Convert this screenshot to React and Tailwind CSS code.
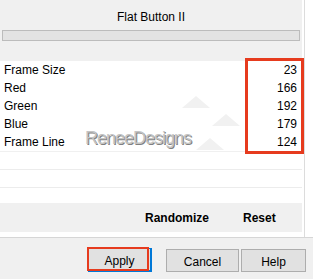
import React from 'react'

const rows = [
  ['Frame Size', 23],
  ['Red', 166],
  ['Green', 192],
  ['Blue', 179],
  ['Frame Line', 124],
]

export default function App() {
  return (
    <div className="relative w-[313px] h-[279px] bg-[#f0f0f0] text-[12px] text-black overflow-hidden" style={{ fontFamily: '"Liberation Sans", Arial, sans-serif' }}>
      <div className="flex h-[238px] bg-white border-b border-[#d6d6d6]">
        <div className="relative w-[302px] flex flex-col">
          <div className="h-[61px] bg-[#f0f0f0] flex flex-col">
            <div className="h-[30px] flex items-center justify-center pt-[4px]">Flat Button II</div>
            <div className="mx-[2px] h-[11px] border border-[#bcbcbc] bg-[#e3e3e3]" />
          </div>
          {rows.map(([label, value]) => (
            <div key={label} className="h-[18px] flex items-center justify-between pl-[4px] pr-[5px]">
              <span>{label}</span>
              <span>{value}</span>
            </div>
          ))}
          <div className="h-[1px] bg-[#f0f0f0]" />
          <div className="h-[18px] border-b border-[#ececec]" />
          <div className="h-[18px] border-b border-[#ececec]" />
          <div className="h-[15px]" />
          <div className="h-[29px] bg-[#f0f0f0] flex items-center font-bold">
            <span className="ml-[145px]">Randomize</span>
            <span className="ml-[34px]">Reset</span>
          </div>

          <svg className="absolute left-[150px] top-[80px]" width="120" height="80">
            <polygon points="46,16 60,28 32,28" fill="#f1f1f1" />
            <polygon points="76,34 90,46 62,46" fill="#f1f1f1" />
            <polygon points="60,58 74,70 46,70" fill="#f1f1f1" />
          </svg>
          <div className="absolute left-[85px] top-[125px] text-[18px] tracking-[-1px] text-[#c4c4c4]" style={{ textShadow: '1px 1px 0 #808080' }}>ReneeDesigns</div>

          <div className="absolute left-[245px] top-[58px] w-[59px] h-[96px] border-[3px] border-[#e63b1e]" />
        </div>
        <div className="w-[3px] border-r border-[#dcdcdc]" />
        <div className="flex-1 bg-white" />
      </div>

      <div className="flex items-start mt-[10px]">
        <div className="relative ml-[88px] w-[64px] h-[24px]">
          <div className="w-full h-full bg-[#e1e1e1] border border-[#0078d7] border-r-2 border-b-2 flex items-center justify-center pt-[2px]">Apply</div>
          <div className="absolute left-[-1px] top-[-1px] w-[62px] h-[24px] border-2 border-[#e63b1e]" />
        </div>
        <div className="ml-[14px] mt-[1px] w-[73px] h-[23px] bg-[#e1e1e1] border border-[#adadad] flex items-center justify-center pt-[2px]">Cancel</div>
        <div className="ml-[2px] mt-[1px] w-[65px] h-[23px] bg-[#e1e1e1] border border-[#adadad] flex items-center justify-center pt-[2px]">Help</div>
      </div>
    </div>
  )
}
